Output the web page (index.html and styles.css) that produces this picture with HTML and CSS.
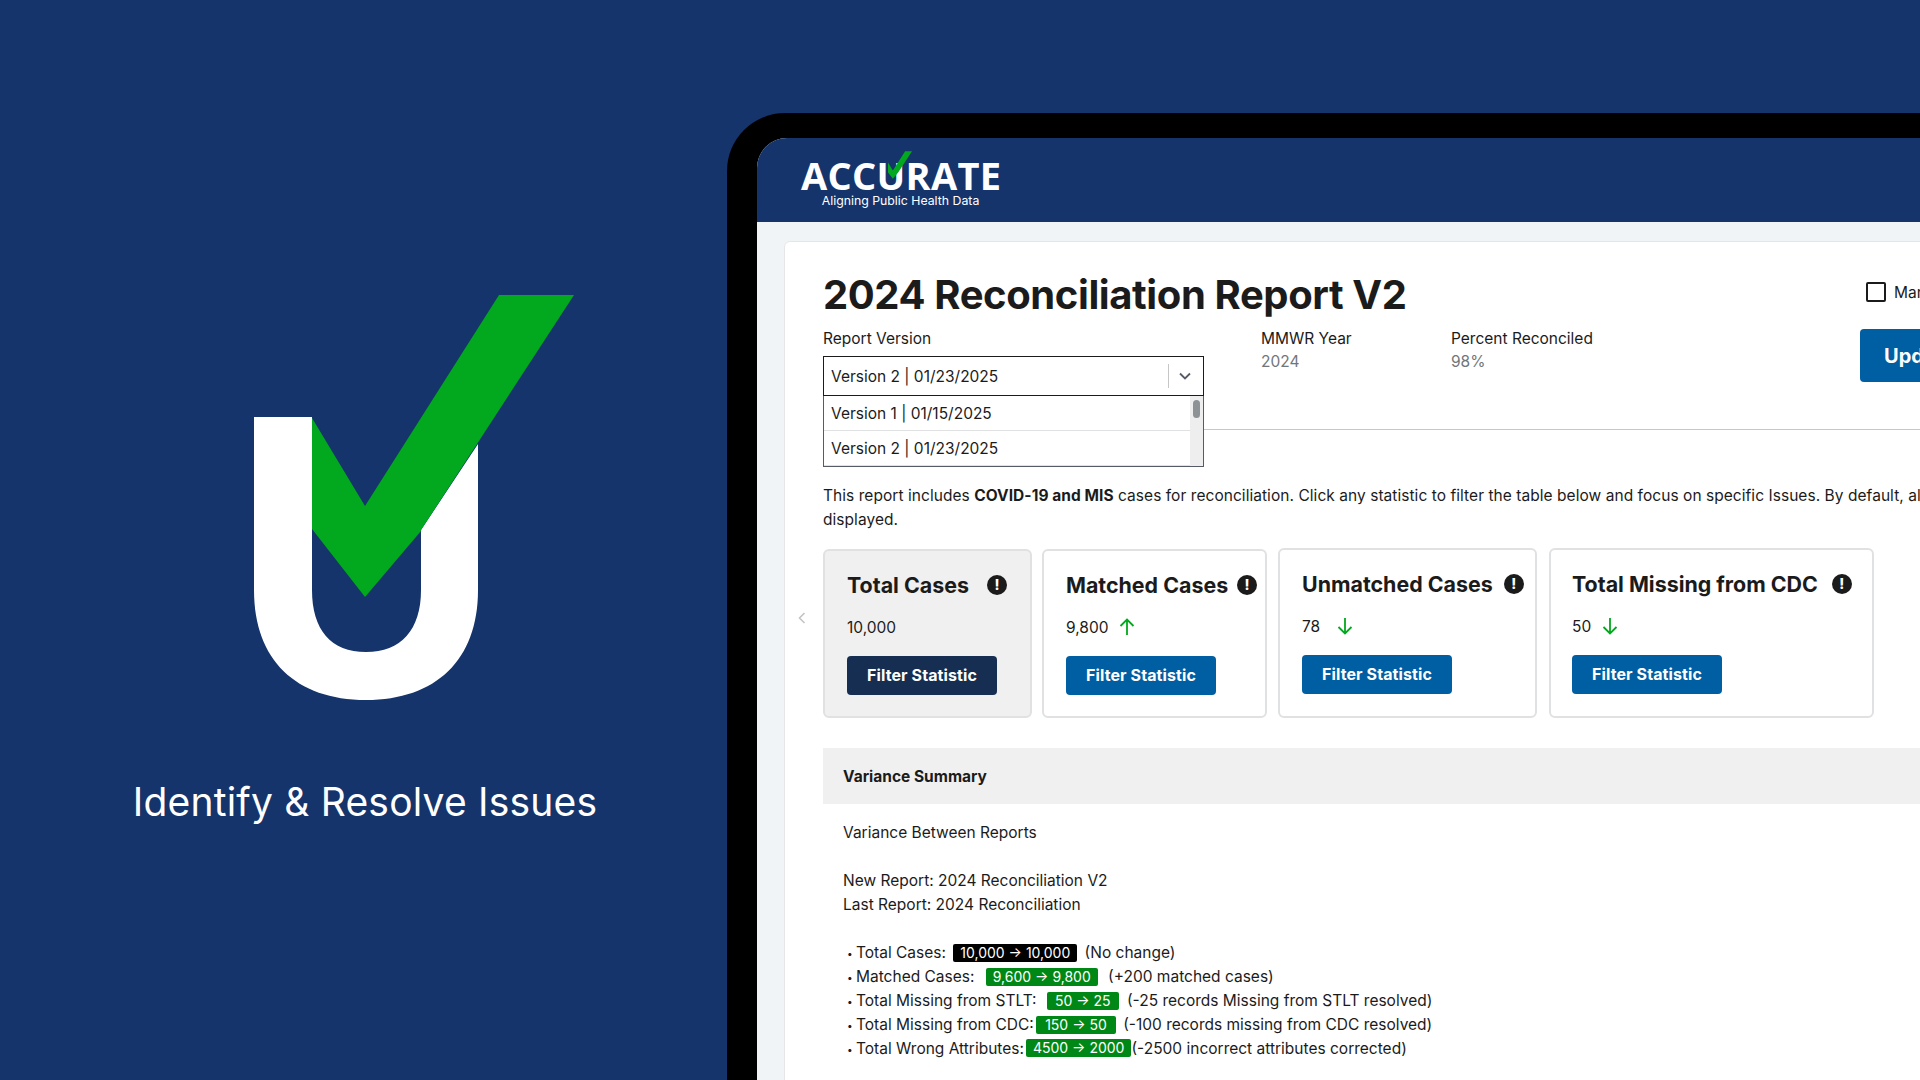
FILE: index.html
```html
<!DOCTYPE html>
<html lang="en">
<head>
    <meta charset="UTF-8">
    <title>Accurate - Identify &amp; Resolve Issues</title>
    <link rel="stylesheet" href="styles.css">
</head>
<body>

    <!-- Left side: big logo and caption -->
    <div class="intro">
        <svg class="intro-logo" viewBox="253 295 320 405" width="320" height="405">
            <path fill="#fff" d="M253 417H311V590C311 630 330 652 365 652C400 652 420 630 420 590V530L477 444V590C477 660 435 700 365 700C295 700 253 660 253 590Z"/>
            <path fill="#02a81d" d="M498 295H573L420 530V531L364 597L311 529V418L364 506Z"/>
        </svg>
        <p class="intro-text">Identify &amp; Resolve Issues</p>
    </div>

    <!-- Tablet frame -->
    <div class="device">
        <div class="screen">
            <div class="topbar">
                <div class="brand">
                    <div class="brand-name">ACCURATE</div>
                    <div class="brand-tag">Aligning Public Health Data</div>
                    <svg class="brand-check" viewBox="311 295 262 302" width="24" height="28">
                        <path fill="#02a81d" d="M498 295H573L420 530V531L364 597L311 529V418L364 506Z"/>
                    </svg>
                </div>
            </div>

            <div class="content">
                <div class="panel">
                    <div class="report-head">
                        <div class="head-left">
                            <h1>2024 Reconciliation Report V2</h1>
                            <div class="meta-row">
                                <div class="version-field">
                                    <div class="meta-label">Report Version</div>
                                    <div class="select">
                                        <span>Version 2 | 01/23/2025</span>
                                        <span class="select-sep"></span>
                                        <svg class="select-arrow" viewBox="0 0 12 8" width="12" height="8">
                                            <path d="M1 1.5L6 6.5L11 1.5" fill="none" stroke="#565c65" stroke-width="1.8"/>
                                        </svg>
                                    </div>
                                    <div class="select-menu">
                                        <div class="select-option">Version 1 | 01/15/2025</div>
                                        <div class="select-option">Version 2 | 01/23/2025</div>
                                        <div class="select-scroll"><span class="select-thumb"></span></div>
                                    </div>
                                </div>
                                <div class="meta-year">
                                    <div class="meta-label">MMWR Year</div>
                                    <div class="meta-value">2024</div>
                                </div>
                                <div class="meta-percent">
                                    <div class="meta-label">Percent Reconciled</div>
                                    <div class="meta-value">98%</div>
                                </div>
                            </div>
                        </div>
                        <div class="head-right">
                            <label class="check-row"><span class="checkbox"></span>Mark as Reconciled</label>
                            <button class="btn btn-update">Update Report</button>
                        </div>
                    </div>

                    <p class="intro-para">This report includes <b>COVID-19 and MIS</b> cases for reconciliation. Click any statistic to filter the table below and focus on specific Issues. By default, all Issues are displayed.</p>

                    <div class="stats">
                        <svg class="stats-prev" viewBox="0 0 8 12" width="8" height="12">
                            <path d="M6.5 1L1.5 6L6.5 11" fill="none" stroke="#c4c4c4" stroke-width="1.6"/>
                        </svg>

                        <div class="stat stat-active stat-low">
                            <div class="stat-title">Total Cases <span class="info">!</span></div>
                            <div class="stat-value">10,000</div>
                            <button class="btn btn-filter btn-dark">Filter Statistic</button>
                        </div>
                        <div class="stat stat-matched stat-low">
                            <div class="stat-title">Matched Cases <span class="info">!</span></div>
                            <div class="stat-value">9,800
                                <svg class="trend" viewBox="0 0 16 18" width="16" height="18"><path d="M8 17V1.5M1.5 8L8 1.5L14.5 8" fill="none" stroke="#02a81d" stroke-width="1.8"/></svg>
                            </div>
                            <button class="btn btn-filter">Filter Statistic</button>
                        </div>
                        <div class="stat stat-unmatched">
                            <div class="stat-title">Unmatched Cases <span class="info">!</span></div>
                            <div class="stat-value">78
                                <svg class="trend" viewBox="0 0 16 18" width="16" height="18"><path d="M8 1V16.5M1.5 10L8 16.5L14.5 10" fill="none" stroke="#02a81d" stroke-width="1.8"/></svg>
                            </div>
                            <button class="btn btn-filter">Filter Statistic</button>
                        </div>
                        <div class="stat stat-missing">
                            <div class="stat-title">Total Missing from CDC <span class="info">!</span></div>
                            <div class="stat-value">50
                                <svg class="trend" viewBox="0 0 16 18" width="16" height="18"><path d="M8 1V16.5M1.5 10L8 16.5L14.5 10" fill="none" stroke="#02a81d" stroke-width="1.8"/></svg>
                            </div>
                            <button class="btn btn-filter">Filter Statistic</button>
                        </div>
                    </div>

                    <div class="summary-head">Variance Summary</div>
                    <div class="summary-body">
                        <p class="summary-line">Variance Between Reports</p>
                        <p class="summary-line summary-gap">New Report: 2024 Reconciliation V2</p>
                        <p class="summary-line">Last Report: 2024 Reconciliation</p>
                        <p class="summary-line summary-gap"><span class="dot">&#8226;</span>Total Cases: <span class="tag tag-black tag-a">10,000 &rarr; 10,000</span> (No change)</p>
                        <p class="summary-line"><span class="dot">&#8226;</span>Matched Cases: <span class="tag tag-b">9,600 &rarr; 9,800</span> (+200 matched cases)</p>
                        <p class="summary-line"><span class="dot">&#8226;</span>Total Missing from STLT: <span class="tag tag-c">50 &rarr; 25</span> (-25 records Missing from STLT resolved)</p>
                        <p class="summary-line"><span class="dot">&#8226;</span>Total Missing from CDC: <span class="tag tag-d">150 &rarr; 50</span> (-100 records missing from CDC resolved)</p>
                        <p class="summary-line"><span class="dot">&#8226;</span>Total Wrong Attributes:<span class="tag tag-e">4500 &rarr; 2000</span>(-2500 incorrect attributes corrected)</p>
                    </div>
                </div>
            </div>
        </div>
    </div>

</body>
</html>
```

FILE: styles.css
```css
* {
    margin: 0;
    padding: 0;
    box-sizing: border-box;
}

body {
    width: 1920px;
    height: 1080px;
    overflow: hidden;
    display: flex;
    background-color: #15346b;
    font-family: Inter, "Liberation Sans", sans-serif;
    color: #1b1b1b;
}

/* Left side */
.intro {
    width: 727px;
    flex-shrink: 0;
    display: flex;
    flex-direction: column;
    align-items: center;
    padding-top: 295px;
}

.intro-logo {
    display: block;
    margin-left: 100px;
}

.intro-text {
    margin-top: 78px;
    margin-left: 3px;
    font-size: 39px;
    line-height: 48px;
    color: #fff;
    letter-spacing: 0.2px;
}

/* Tablet frame */
.device {
    width: 1300px;
    height: 967px;
    margin-top: 113px;
    padding: 25px 0 0 30px;
    background-color: #000;
    border-radius: 58px 0 0 0;
    flex-shrink: 0;
}

.screen {
    height: 100%;
    background-color: #f0f4f7;
    border-radius: 30px 0 0 0;
    overflow: hidden;
}

.topbar {
    height: 84px;
    background-color: #15346b;
    padding: 13px 0 0 44px;
}

.brand {
    position: relative;
    width: 199px;
}

.brand-name {
    font-family: "Open Sans", sans-serif;
    font-size: 38px;
    font-weight: 700;
    line-height: 44px;
    margin-top: 2px;
    color: #fff;
    letter-spacing: 0.3px;
    white-space: nowrap;
}

.brand-tag {
    font-size: 12.3px;
    line-height: 16px;
    color: #fff;
    text-align: center;
    margin-top: -4px;
}

.brand-check {
    position: absolute;
    left: 87px;
    top: -2px;
}

.content {
    padding: 19px 0 0 27px;
}

.panel {
    width: 1300px;
    height: 900px;
    background-color: #fff;
    border: 1px solid #e6e6e6;
    border-radius: 6px;
    padding: 26px 0 0 38px;
}

.report-head {
    display: flex;
    height: 162px;
    border-bottom: 1px solid #c6c6d0;
}

.head-left {
    width: 1037px;
    flex-shrink: 0;
}

h1 {
    font-size: 40px;
    font-weight: 700;
    line-height: 54px;
    letter-spacing: -0.4px;
}

.meta-row {
    display: flex;
    margin-top: 5px;
}

.version-field {
    width: 438px;
    position: relative;
}

.meta-year {
    width: 190px;
}

.meta-label {
    font-size: 15.5px;
    line-height: 24px;
}

.meta-value {
    font-size: 15.5px;
    line-height: 24px;
    color: #71767a;
    margin-top: -1px;
}

.select {
    width: 381px;
    height: 40px;
    margin-top: 5px;
    border: 1.5px solid #1b1b1b;
    display: flex;
    align-items: center;
    padding-left: 7px;
    font-size: 15.5px;
    background-color: #fff;
}

.select span:first-child {
    flex: 1;
}

.select-sep {
    width: 1px;
    height: 24px;
    background-color: #c6c6c6;
}

.select-arrow {
    margin: 0 12px 0 10px;
}

.select-menu {
    position: absolute;
    left: 0;
    top: 69px;
    width: 381px;
    height: 71px;
    background-color: #fff;
    border: 1.5px solid #565c65;
    border-top: 0;
    overflow: hidden;
    padding-right: 13px;
    font-size: 15.5px;
}

.select-option {
    height: 35px;
    line-height: 35px;
    padding-left: 7px;
    border-bottom: 1px solid #dfe1e2;
}

.select-scroll {
    position: absolute;
    top: 0;
    right: 0;
    width: 13px;
    height: 100%;
    background-color: #eeeeee;
}

.select-thumb {
    display: block;
    width: 7px;
    height: 18px;
    margin: 4px 0 0 3px;
    border-radius: 4px;
    background-color: #8d9297;
}

.head-right {
    padding-top: 14px;
}

.check-row {
    display: flex;
    align-items: center;
    gap: 8px;
    margin-left: 6px;
    font-size: 15.5px;
    white-space: nowrap;
}

.checkbox {
    width: 20px;
    height: 20px;
    border: 2px solid #1b1b1b;
    border-radius: 2px;
    flex-shrink: 0;
}

.btn {
    display: block;
    border: 0;
    border-radius: 4px;
    background-color: #005ea2;
    color: #fff;
    font-family: inherit;
    font-weight: 700;
}

.btn-update {
    margin-top: 27px;
    width: 200px;
    height: 53px;
    font-size: 20px;
    text-align: left;
    padding-left: 24px;
}

.intro-para {
    width: 1190px;
    margin-top: 54px;
    font-size: 15.5px;
    line-height: 24px;
    letter-spacing: 0.05px;
}

/* Statistic cards */
.stats {
    position: relative;
    display: flex;
    align-items: flex-start;
    margin-top: 16px;
}

.stats-prev {
    position: absolute;
    left: -25px;
    top: 64px;
}

.stat {
    height: 170px;
    border: 2px solid #dfe1e2;
    border-radius: 6px;
    padding: 19px 0 0 22px;
    margin-right: 12px;
    flex-shrink: 0;
}

.stat-low {
    margin-top: 1px;
    height: 169px;
}

.stat-active {
    background-color: #f0f0f0;
    width: 209px;
    margin-right: 10px;
}

.stat-matched {
    width: 225px;
    margin-right: 11px;
}

.stat-unmatched {
    width: 259px;
}

.stat-missing {
    width: 325px;
    padding-left: 21px;
}

.stat-title {
    display: flex;
    align-items: center;
    font-size: 21.4px;
    font-weight: 700;
    line-height: 30px;
    white-space: nowrap;
}

.info {
    width: 20px;
    height: 20px;
    margin-left: 11px;
    border-radius: 50%;
    background-color: #1b1b1b;
    color: #fff;
    font-size: 14px;
    line-height: 20px;
    font-weight: 800;
    text-align: center;
}

.stat-active .info {
    margin-left: 18px;
}

.stat-matched .info {
    margin-left: 9px;
}

.stat-missing .info {
    margin-left: 14px;
}

.stat-value {
    display: flex;
    align-items: center;
    gap: 11px;
    height: 24px;
    margin-top: 15px;
    font-size: 15.5px;
}

.stat-unmatched .stat-value {
    gap: 17px;
}

.btn-filter {
    margin-top: 17px;
    width: 150px;
    height: 39px;
    padding-bottom: 2px;
    font-size: 16px;
    letter-spacing: 0.1px;
}

.btn-dark {
    background-color: #162e51;
}

/* Variance summary */
.summary-head {
    width: 1240px;
    height: 56px;
    margin-top: 30px;
    padding-left: 20px;
    background-color: #f0f0f0;
    font-size: 15.5px;
    font-weight: 700;
    line-height: 58px;
}

.summary-body {
    padding: 17px 0 0 20px;
}

.summary-line {
    font-size: 15.5px;
    line-height: 24px;
    white-space: nowrap;
}

.summary-gap {
    margin-top: 24px;
}

.dot {
    display: inline-block;
    width: 9px;
    margin-left: 4px;
    font-size: 10px;
    vertical-align: 1px;
}

.tag {
    display: inline-block;
    height: 18px;
    line-height: 18px;
    padding: 0 7px;
    border-radius: 2px;
    background-color: #008817;
    color: #fff;
    font-size: 14px;
}

.tag-black {
    background-color: #000;
}

.tag-a {
    margin: 0 3px 0 3px;
}

.tag-b {
    margin: 0 6px 0 7px;
}

.tag-c {
    margin: 0 4px 0 6px;
    padding: 0 8px;
}

.tag-d {
    margin: 0 3px 0 -2px;
    padding: 0 9px;
}

.tag-e {
    margin-left: 2px;
    vertical-align: 1px;
}
```
